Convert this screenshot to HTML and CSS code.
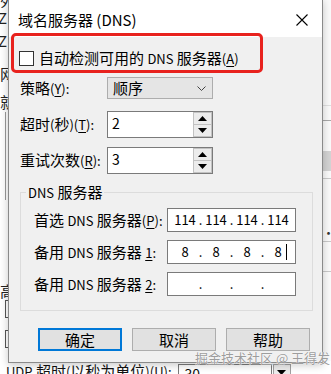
FILE: index.html
```html
<!DOCTYPE html>
<html lang="zh-CN">
<head>
  <meta charset="UTF-8" />
  <title>域名服务器 (DNS)</title>
  <link rel="stylesheet" href="styles.css">
</head>
<body>
  <div class="desk">
    <div class="under-left">
      <span class="ul-1">列</span>
      <span class="ul-2">Z</span>
      <span class="ul-3">Z</span>
      <span class="ul-4">网</span>
      <span class="ul-5">就</span>
      <span class="ul-bar"></span>
      <span class="ul-6">高</span>
      <span class="ul-box ul-box1"></span>
      <span class="ul-box ul-box2"></span>
    </div>
    <div class="under-mid"></div>
    <div class="under-right">
      <div class="ur-line ur-a"></div>
      <div class="ur-line ur-b"></div>
      <div class="ur-band"></div>
      <div class="ur-line ur-c"></div>
      <div class="ur-dots">··</div>
      <div class="ur-line ur-d"></div>
      <div class="ur-line ur-e"></div>
    </div>
    <div class="under-bottom">
      <span><span class="l">UDP</span> 超时<span class="l">(</span>以秒为单位<span class="l">)(<u>U</u>):</span></span>
      <span class="ub-field">30</span>
      <span class="ub-spin">
        <svg width="9" height="5" viewBox="0 0 9 5"><polygon points="0,0 9,0 4.5,5" fill="#000"/></svg>
      </span>
    </div>
  </div>

  <div class="dialog">
    <div class="titlebar">
      <span class="title">域名服务器 (DNS)</span>
      <span class="close">
        <svg width="12" height="12" viewBox="0 0 12 12"><path d="M0.5 0.5L11.5 11.5M11.5 0.5L0.5 11.5" stroke="#000" stroke-width="1.1"/></svg>
      </span>
    </div>

    <div class="dialog-body">
      <label class="check-row"><span class="checkbox"></span><span>自动检测可用的 <span class="l">DNS</span> 服务器<span class="l">(<u>A</u>)</span></span></label>

      <div class="form-row row-combo">
        <span class="label">策略<span class="l">(<u>Y</u>):</span></span>
        <div class="combo">
          <span>顺序</span>
          <svg width="9" height="5" viewBox="0 0 9 5"><polyline points="0.5,0.5 4.5,4.5 8.5,0.5" fill="none" stroke="#444" stroke-width="1"/></svg>
        </div>
      </div>

      <div class="form-row row-spin">
        <span class="label">超时<span class="l">(</span>秒<span class="l">)(<u>T</u>):</span></span>
        <div class="spin">
          <span class="spin-value">2</span>
          <div class="spin-btns">
            <span class="spin-btn"><svg width="9" height="5" viewBox="0 0 9 5"><polygon points="0,5 9,5 4.5,0" fill="#000"/></svg></span>
            <span class="spin-btn"><svg width="9" height="5" viewBox="0 0 9 5"><polygon points="0,0 9,0 4.5,5" fill="#000"/></svg></span>
          </div>
        </div>
      </div>

      <div class="form-row row-spin row-retry">
        <span class="label">重试次数<span class="l">(<u>R</u>):</span></span>
        <div class="spin">
          <span class="spin-value">3</span>
          <div class="spin-btns">
            <span class="spin-btn"><svg width="9" height="5" viewBox="0 0 9 5"><polygon points="0,5 9,5 4.5,0" fill="#000"/></svg></span>
            <span class="spin-btn"><svg width="9" height="5" viewBox="0 0 9 5"><polygon points="0,0 9,0 4.5,5" fill="#000"/></svg></span>
          </div>
        </div>
      </div>

      <fieldset class="group">
        <legend><span class="l">DNS</span> 服务器</legend>
        <div class="ip-row">
          <span class="ip-label">首选 <span class="l">DNS</span> 服务器<span class="l">(<u>P</u>):</span></span>
          <div class="ip">
            <span class="oct">114</span><span class="dot">.</span>
            <span class="oct">114</span><span class="dot">.</span>
            <span class="oct">114</span><span class="dot">.</span>
            <span class="oct">114</span>
          </div>
        </div>
        <div class="ip-row">
          <span class="ip-label">备用 <span class="l">DNS</span> 服务器 <span class="l"><u>1</u>:</span></span>
          <div class="ip">
            <span class="oct">8</span><span class="dot">.</span>
            <span class="oct">8</span><span class="dot">.</span>
            <span class="oct">8</span><span class="dot">.</span>
            <span class="oct">8<span class="caret"></span></span>
          </div>
        </div>
        <div class="ip-row">
          <span class="ip-label">备用 <span class="l">DNS</span> 服务器 <span class="l"><u>2</u>:</span></span>
          <div class="ip">
            <span class="oct"></span><span class="dot">.</span>
            <span class="oct"></span><span class="dot">.</span>
            <span class="oct"></span><span class="dot">.</span>
            <span class="oct"></span>
          </div>
        </div>
      </fieldset>

      <div class="buttons">
        <button class="btn primary">确定</button>
        <button class="btn">取消</button>
        <button class="btn">帮助</button>
      </div>
    </div>
  </div>

  <div class="callout"></div>
  <div class="watermark">掘金技术社区 @ 王得发</div>
</body>
</html>
```
FILE: styles.css
```css
body {
  margin: 0;
  width: 331px;
  height: 374px;
  overflow: hidden;
  position: relative;
  background: #fff;
  font-family: "Noto Sans CJK SC", "Noto Sans", sans-serif;
  font-size: 15px;
  color: #000;
}
u {
  text-underline-offset: 2px;
}
/* latin runs inside chinese labels render smaller, like on windows */
.l {
  font-size: 13px;
}

/* window underneath */
.desk {
  display: grid;
  grid-template-columns: 8px 1fr 9px;
  grid-template-rows: 361px 13px;
  height: 374px;
}
.under-left {
  display: flex;
  flex-direction: column;
  align-items: flex-end;
  overflow: hidden;
  line-height: 16px;
  color: #222;
}
.under-left span {
  display: block;
  height: 16px;
  white-space: nowrap;
}
.ul-1 { margin-top: -8px; margin-right: -7px; }
.ul-2 { margin-top: 2px; margin-right: 1px; }
.ul-3 { margin-top: 7px; margin-right: 1px; }
.ul-4 { margin-top: 17px; margin-right: -7px; }
.ul-5 { margin-top: 12px; margin-right: -7px; }
.under-left .ul-bar {
  margin-top: 2px;
  height: 88px;
  width: 2px;
  border-left: 1px solid #9a9a9a;
}
.ul-6 { margin-top: 83px; margin-right: -7px; }
.under-left .ul-box {
  width: 2px;
  height: 16px;
  border: 1px solid #555;
  border-right: 0;
}
.ul-box1 { margin-top: 1px; }
.ul-box2 { margin-top: 12px; }

.under-right {
  display: flex;
  flex-direction: column;
  background: #fafafa;
}
.ur-line {
  border-bottom: 1px solid #c9c9c9;
}
.ur-a { margin-top: 105px; border-color: #e0e0e0; }
.ur-b { margin-top: 14px; border-color: #a8a8a8; }
.ur-band {
  margin-top: 30px;
  height: 20px;
  background: #d3d3d3;
}
.ur-c { margin-top: 7px; }
.ur-dots {
  margin-top: 47px;
  font-size: 13px;
  line-height: 14px;
  letter-spacing: 1px;
  color: #333;
}
.ur-d { margin-top: 1px; }
.ur-e { margin-top: 29px; }

.under-bottom {
  grid-column: 1 / 4;
  display: flex;
  align-items: flex-start;
  padding-left: 6px;
  line-height: 20px;
  color: #111;
  white-space: nowrap;
}
.ub-field {
  margin-left: 6px;
  margin-top: 3px;
  width: 86px;
  height: 20px;
  padding-left: 6px;
  border: 1px solid #7a7a7a;
  font-size: 14px;
  line-height: 18px;
  background: #fff;
}
.ub-spin {
  margin-left: 1px;
  margin-top: 3px;
  width: 18px;
  height: 14px;
  border: 1px solid #a0a0a0;
  background: #ececec;
  display: flex;
  justify-content: center;
  padding-top: 5px;
  box-sizing: border-box;
}

/* dialog */
.dialog {
  position: absolute;
  left: 8px;
  top: -1px;
  width: 313px;
  border: 1px solid #8a8a8a;
  background: #f0f0f0;
  box-shadow: 0 2px 8px rgba(0, 0, 0, 0.22);
  white-space: nowrap;
}
.titlebar {
  height: 37px;
  background: #fff;
  display: flex;
  align-items: center;
  padding: 2px 0 0 9px;
  box-sizing: border-box;
}
.title {
  line-height: 20px;
}
.close {
  margin-left: auto;
  width: 40px;
  display: flex;
  justify-content: center;
}
.dialog-body {
  padding: 11px 0 11px 0;
}
.check-row {
  display: flex;
  align-items: center;
  height: 20px;
  padding-left: 10px;
  gap: 5px;
  line-height: 20px;
}
.checkbox {
  width: 15px;
  height: 15px;
  box-sizing: border-box;
  border: 1px solid #333;
  background: #fff;
}

.form-row {
  display: flex;
  align-items: center;
  padding-left: 11px;
  line-height: 20px;
}
.label {
  width: 87px;
}
.row-combo { margin-top: 9px; }
.row-spin { margin-top: 12px; }
.row-retry { margin-top: 9px; }

.combo {
  width: 106px;
  height: 22px;
  box-sizing: border-box;
  border: 1px solid #adadad;
  background: #e5e5e5;
  display: flex;
  align-items: center;
  justify-content: space-between;
  padding: 0 6px 0 5px;
}
.spin {
  width: 106px;
  height: 27px;
  box-sizing: border-box;
  border: 1px solid #7a7a7a;
  background: #fff;
  display: flex;
}
.spin-value {
  flex: 1;
  padding: 1px 0 0 4px;
  font-size: 14px;
}
.spin-btns {
  width: 19px;
  display: flex;
  flex-direction: column;
}
.spin-btn {
  flex: 1;
  display: flex;
  align-items: center;
  justify-content: center;
  border: 1px solid #c2c2c2;
  background: #ececec;
}
.spin-btn + .spin-btn {
  border-top: 0;
}

.group {
  margin: 8px 9px 0 11px;
  padding: 5px 15px 14px 5px;
  border: 1px solid #dcdcdc;
}
.group legend {
  padding: 0 2px;
  line-height: 20px;
}
.ip-row {
  display: flex;
  align-items: center;
  padding-left: 8px;
  line-height: 20px;
}
.ip-row + .ip-row {
  margin-top: 8px;
}
.ip-label {
  width: 133px;
}
.ip {
  width: 129px;
  height: 24px;
  box-sizing: border-box;
  border: 1px solid #7a7a7a;
  background: #fff;
  display: flex;
  align-items: center;
  padding-left: 6px;
  font-size: 13px;
}
.oct {
  width: 22px;
  text-align: center;
  position: relative;
}
.dot {
  width: 9px;
  text-align: center;
}
.caret {
  position: absolute;
  right: 2px;
  top: 2px;
  width: 1px;
  height: 16px;
  background: #000;
}

.buttons {
  display: flex;
  gap: 10px;
  margin-top: 17px;
  padding-left: 29px;
}
.btn {
  width: 84px;
  height: 23px;
  padding: 0;
  border: 1px solid #adadad;
  background: #e1e1e1;
  font-family: inherit;
  font-size: 15px;
  line-height: 20px;
  color: #000;
}
.btn.primary {
  border: 2px solid #0078d7;
}

/* annotation overlays */
.callout {
  position: absolute;
  left: 11px;
  top: 33px;
  width: 252px;
  height: 40px;
  box-sizing: border-box;
  border: 3px solid #e8221e;
  border-radius: 5px;
}
.watermark {
  position: absolute;
  left: 195px;
  top: 350px;
  font-size: 13px;
  line-height: 15px;
  color: rgba(130, 130, 130, 0.8);
  text-shadow: 0 0 1px #fff, 0 0 1px #fff;
  white-space: nowrap;
}
```
